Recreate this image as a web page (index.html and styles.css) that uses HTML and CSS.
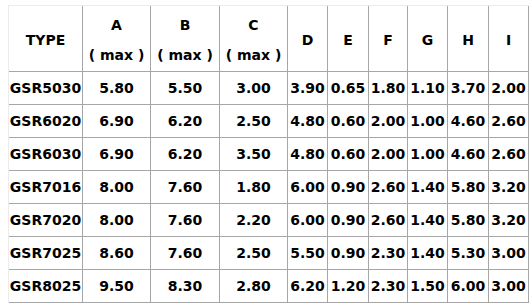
FILE: index.html
```html
<!DOCTYPE html>
<html>
<head>
<meta charset="utf-8">
<link rel="stylesheet" href="styles.css">
</head>
<body>
<table class="spec">
  <colgroup>
    <col class="c-type"><col class="c-a"><col class="c-b"><col class="c-c">
    <col class="c-d"><col class="c-e"><col class="c-f"><col class="c-g"><col class="c-h"><col class="c-i">
  </colgroup>
  <thead>
    <tr>
      <th>TYPE</th>
      <th><div class="hl">A</div><div class="hl">( max )</div></th>
      <th><div class="hl">B</div><div class="hl">( max )</div></th>
      <th><div class="hl">C</div><div class="hl">( max )</div></th>
      <th>D</th><th>E</th><th>F</th><th>G</th><th>H</th><th>I</th>
    </tr>
  </thead>
  <tbody>
    <tr><td>GSR5030</td><td>5.80</td><td>5.50</td><td>3.00</td><td>3.90</td><td>0.65</td><td>1.80</td><td>1.10</td><td>3.70</td><td>2.00</td></tr>
    <tr><td>GSR6020</td><td>6.90</td><td>6.20</td><td>2.50</td><td>4.80</td><td>0.60</td><td>2.00</td><td>1.00</td><td>4.60</td><td>2.60</td></tr>
    <tr><td>GSR6030</td><td>6.90</td><td>6.20</td><td>3.50</td><td>4.80</td><td>0.60</td><td>2.00</td><td>1.00</td><td>4.60</td><td>2.60</td></tr>
    <tr><td>GSR7016</td><td>8.00</td><td>7.60</td><td>1.80</td><td>6.00</td><td>0.90</td><td>2.60</td><td>1.40</td><td>5.80</td><td>3.20</td></tr>
    <tr><td>GSR7020</td><td>8.00</td><td>7.60</td><td>2.20</td><td>6.00</td><td>0.90</td><td>2.60</td><td>1.40</td><td>5.80</td><td>3.20</td></tr>
    <tr><td>GSR7025</td><td>8.60</td><td>7.60</td><td>2.50</td><td>5.50</td><td>0.90</td><td>2.30</td><td>1.40</td><td>5.30</td><td>3.00</td></tr>
    <tr><td>GSR8025</td><td>9.50</td><td>8.30</td><td>2.80</td><td>6.20</td><td>1.20</td><td>2.30</td><td>1.50</td><td>6.00</td><td>3.00</td></tr>
  </tbody>
</table>
</body>
</html>
```
FILE: styles.css
```css
html, body {
  margin: 0;
  background: #ffffff;
}
body {
  padding: 5px 0 0 8px;
  font-family: "DejaVu Sans", Verdana, sans-serif;
  font-weight: bold;
  font-size: 14px;
  color: #000000;
}
.spec {
  border-collapse: separate;
  border-spacing: 0;
  table-layout: fixed;
  width: 521px;
  border-top: 1px solid #ececec;
  border-left: 1px solid #ececec;
}
.spec th,
.spec td {
  box-sizing: border-box;
  padding: 0;
  text-align: center;
  vertical-align: middle;
  white-space: nowrap;
  border-right: 1px solid #a6a6a6;
  border-bottom: 1px solid #a6a6a6;
  font-weight: bold;
}
.spec th {
  height: 65px;
  padding: 4px 0 1px;
}
.spec td {
  height: 33px;
}
.hl {
  line-height: 30px;
}
.c-type { width: 74px; }
.c-a { width: 68px; }
.c-b { width: 69px; }
.c-c { width: 68px; }
.c-d { width: 40px; }
.c-e { width: 41px; }
.c-f { width: 39px; }
.c-g { width: 40px; }
.c-h { width: 41px; }
.c-i { width: 40px; }
```
